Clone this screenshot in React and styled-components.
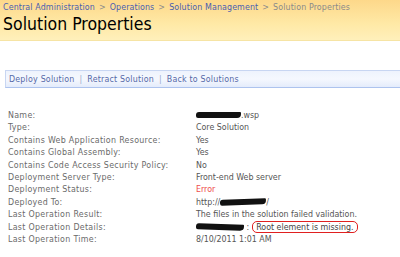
import styled, { createGlobalStyle } from 'styled-components'

const GlobalStyle = createGlobalStyle`
  html, body {
    margin: 0;
    padding: 0;
    background: #ffffff;
    font-family: "DejaVu Sans Condensed", "DejaVu Sans", Tahoma, sans-serif;
    font-stretch: condensed;
  }
`

const Page = styled.div`
  width: 400px;
  height: 257px;
  overflow: hidden;
  background: #ffffff;
`

const TitleArea = styled.div`
  height: 41px;
  padding: 2px 0 0 3px;
  box-sizing: border-box;
  background: linear-gradient(#fdd88a, #ffe9a6 60%, #fff0bb);
  border-bottom: 1px solid #f6e4a4;
`

const Breadcrumb = styled.div`
  font-size: 8.8px;
  line-height: 10px;
  color: #8a8a8a;
  white-space: nowrap;
  letter-spacing: 0.12px;
`

const Crumb = styled.span`
  color: #4a5db0;
`

const Sep = styled.span`
  color: #8a8a8a;
  padding: 0 4px;
`

const PageTitle = styled.h1`
  margin: 1px 0 0 0;
  font-size: 17.5px;
  font-weight: normal;
  line-height: 22px;
  color: #000000;
`

const Toolbar = styled.div`
  margin: 29px 0 0 5px;
  height: 16px;
  display: flex;
  align-items: center;
  padding-left: 3px;
  background: linear-gradient(#eef3fd, #f5f8fe 50%, #e4ecfb);
  border-top: 1px solid #c8d6f2;
  border-bottom: 1px solid #adc3ee;
  border-left: 1px solid #c8d6f2;
  font-size: 8.8px;
  letter-spacing: 0.2px;
  color: #5568a8;
  white-space: nowrap;
`

const ToolSep = styled.span`
  color: #9aa8cc;
  padding: 0 5px;
`

const Props = styled.div`
  margin: 21px 0 0 8px;
  display: grid;
  grid-template-columns: 188px 1fr;
  grid-auto-rows: 12.4px;
  font-size: 8.8px;
  line-height: 12.4px;
  color: #555555;
  white-space: nowrap;
`

const Label = styled.div`
  color: #6a6a6a;
  letter-spacing: 0.3px;
`

const Value = styled.div`
  display: flex;
  align-items: center;
  color: ${({ $error }) => ($error ? '#ee4c4c' : '#555555')};
`

const Redacted = styled.span`
  display: inline-block;
  width: ${({ $w }) => $w}px;
  height: 6px;
  background: #111111;
  border-radius: 3px 1px 4px 2px;
  transform: rotate(${({ $r }) => $r || 0}deg);
`

const Circled = styled.span`
  margin-left: 3px;
  padding: 0 3px;
  line-height: 10px;
  border: 1.3px solid #e02020;
  border-radius: 5px;
  color: #444444;
`

const rows = [
  ['Name:', <><Redacted $w={45} />.wsp</>],
  ['Type:', 'Core Solution'],
  ['Contains Web Application Resource:', 'Yes'],
  ['Contains Global Assembly:', 'Yes'],
  ['Contains Code Access Security Policy:', 'No'],
  ['Deployment Server Type:', 'Front-end Web server'],
  ['Deployment Status:', 'Error', true],
  ['Deployed To:', <>http://<Redacted $w={46} $r={-2} />/</>],
  ['Last Operation Result:', 'The files in the solution failed validation.'],
  ['Last Operation Details:', <><Redacted $w={48} $r={2} />&nbsp;:<Circled>Root element is missing.</Circled></>],
  ['Last Operation Time:', '8/10/2011 1:01 AM'],
]

export default function App() {
  return (
    <Page>
      <GlobalStyle />
      <TitleArea>
        <Breadcrumb>
          <Crumb>Central Administration</Crumb>
          <Sep>&gt;</Sep>
          <Crumb>Operations</Crumb>
          <Sep>&gt;</Sep>
          <Crumb>Solution Management</Crumb>
          <Sep>&gt;</Sep>
          Solution Properties
        </Breadcrumb>
        <PageTitle>Solution Properties</PageTitle>
      </TitleArea>
      <Toolbar>
        Deploy Solution<ToolSep>|</ToolSep>Retract Solution<ToolSep>|</ToolSep>Back to Solutions
      </Toolbar>
      <Props>
        {rows.map(([label, value, err]) => (
          <div key={label} style={{ display: 'contents' }}>
            <Label>{label}</Label>
            <Value $error={err}>{value}</Value>
          </div>
        ))}
      </Props>
    </Page>
  )
}
